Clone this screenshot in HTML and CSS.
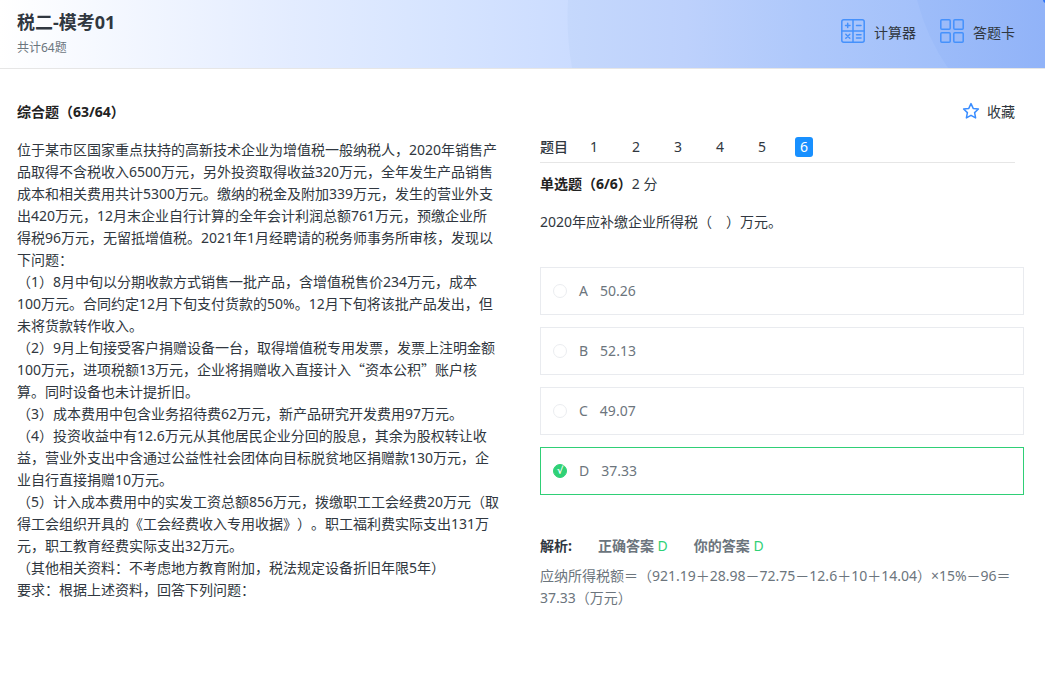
FILE: index.html
```html
<!DOCTYPE html>
<html lang="zh-CN">
<head>
<meta charset="utf-8">
<title>税二-模考01</title>
<link rel="stylesheet" href="styles.css">
</head>
<body>
<header class="header">
  <svg class="header-bg" viewBox="0 0 1045 68" preserveAspectRatio="none" aria-hidden="true">
    <defs>
      <linearGradient id="base" gradientUnits="userSpaceOnUse" x1="0" y1="0" x2="1045" y2="0">
        <stop offset="0" stop-color="#ffffff"/>
        <stop offset="0.28" stop-color="#e3ecff"/>
        <stop offset="0.39" stop-color="#d9e6ff"/>
        <stop offset="0.55" stop-color="#cbdcff"/>
        <stop offset="1" stop-color="#a9c5fd"/>
      </linearGradient>
      <linearGradient id="wave" gradientUnits="userSpaceOnUse" x1="567" y1="0" x2="1045" y2="0">
        <stop offset="0" stop-color="#c5d8fc"/>
        <stop offset="0.25" stop-color="#bdd1fc"/>
        <stop offset="0.5" stop-color="#aec8fb"/>
        <stop offset="1" stop-color="#98b9f9"/>
      </linearGradient>
      <linearGradient id="edge" gradientUnits="userSpaceOnUse" x1="917" y1="0" x2="1045" y2="0">
        <stop offset="0" stop-color="#9ebdf9"/>
        <stop offset="1" stop-color="#91b3f8"/>
      </linearGradient>
    </defs>
    <rect width="1045" height="68" fill="url(#base)"/>
    <path d="M568 0Q566 34 572 68H1045V0Z" fill="url(#wave)"/>
    <path d="M917 0Q927 38 948 68H1045V0Z" fill="url(#edge)"/>
    <path d="M1043 0Q1043 2 1045 3V0Z" fill="#2f74f5"/>
  </svg>
  <div class="heading">
    <h1 class="title">税二-模考01</h1>
    <p class="total">共计64题</p>
  </div>
  <nav class="tools">
    <button class="tool" type="button">
      <svg class="tool-icon" width="26" height="26" viewBox="0 0 26 26" fill="none" stroke="#4591fc" stroke-width="1.5" stroke-linecap="round" aria-hidden="true">
        <rect x="1.8" y="1.8" width="22.4" height="22.4" rx="2"/>
        <path d="M13 2V24M2 13H24M5.5 7.4H10M7.7 5.2V9.6M16.5 7.4H21M5.8 16.3L9.8 20.3M9.8 16.3L5.8 20.3M16.5 16.7H21M16.5 19.9H21"/>
      </svg>
      计算器
    </button>
    <button class="tool" type="button">
      <svg class="tool-icon" width="26" height="26" viewBox="0 0 26 26" fill="none" stroke="#4591fc" stroke-width="1.5" aria-hidden="true">
        <rect x="1.8" y="1.8" width="9.4" height="9.4" rx="1"/>
        <rect x="14.8" y="1.8" width="9.4" height="9.4" rx="1"/>
        <rect x="1.8" y="14.8" width="9.4" height="9.4" rx="1"/>
        <rect x="14.8" y="14.8" width="9.4" height="9.4" rx="1"/>
      </svg>
      答题卡
    </button>
  </nav>
</header>
<main class="main">
  <div class="bar">
    <h2 class="bar-title">综合题（63/64）</h2>
    <button class="favorite" type="button">
      <svg class="star" width="18" height="18" viewBox="0 0 18 18" fill="none" stroke="#3a8dff" stroke-width="1.5" stroke-linejoin="round" aria-hidden="true">
        <path d="M9 1.6L11.2 6.4L16.4 7L12.6 10.6L13.6 15.9L9 13.3L4.4 15.9L5.4 10.6L1.6 7L6.8 6.4Z"/>
      </svg>
      收藏
    </button>
  </div>
  <div class="columns">
    <article class="material">
      <p>位于某市区国家重点扶持的高新技术企业为增值税一般纳税人，2020年销售产<br>品取得不含税收入6500万元，另外投资取得收益320万元，全年发生产品销售<br>成本和相关费用共计5300万元。缴纳的税金及附加339万元，发生的营业外支<br>出420万元，12月末企业自行计算的全年会计利润总额761万元，预缴企业所<br>得税96万元，无留抵增值税。2021年1月经聘请的税务师事务所审核，发现以<br>下问题：</p>
      <p>（1）8月中旬以分期收款方式销售一批产品，含增值税售价234万元，成本<br>100万元。合同约定12月下旬支付货款的50%。12月下旬将该批产品发出，但<br>未将货款转作收入。</p>
      <p>（2）9月上旬接受客户捐赠设备一台，取得增值税专用发票，发票上注明金额<br>100万元，进项税额13万元，企业将捐赠收入直接计入<span class="quoted">“资本公积”</span>账户核<br>算。同时设备也未计提折旧。</p>
      <p>（3）成本费用中包含业务招待费62万元，新产品研究开发费用97万元。</p>
      <p>（4）投资收益中有12.6万元从其他居民企业分回的股息，其余为股权转让收<br>益，营业外支出中含通过公益性社会团体向目标脱贫地区捐赠款130万元，企<br>业自行直接捐赠10万元。</p>
      <p>（5）计入成本费用中的实发工资总额856万元，拨缴职工工会经费20万元（取<br>得工会组织开具的《工会经费收入专用收据》）。职工福利费实际支出131万<br>元，职工教育经费实际支出32万元。</p>
      <p>（其他相关资料：不考虑地方教育附加，税法规定设备折旧年限5年）</p>
      <p>要求：根据上述资料，回答下列问题：</p>
    </article>
    <section class="question">
      <div class="tabs">
        <span class="tabs-label">题目</span>
        <div class="tabs-list">
          <button class="tab" type="button">1</button>
          <button class="tab" type="button">2</button>
          <button class="tab" type="button">3</button>
          <button class="tab" type="button">4</button>
          <button class="tab" type="button">5</button>
          <button class="tab tab-active" type="button">6</button>
        </div>
      </div>
      <p class="kind"><strong>单选题（6/6）</strong>2 分</p>
      <p class="stem">2020年应补缴企业所得税（　）万元。</p>
      <div class="options">
        <label class="option"><input class="radio" type="radio" name="answer"><span>A</span><span>50.26</span></label>
        <label class="option"><input class="radio" type="radio" name="answer"><span>B</span><span>52.13</span></label>
        <label class="option"><input class="radio" type="radio" name="answer"><span>C</span><span>49.07</span></label>
        <label class="option option-right"><input class="radio" type="radio" name="answer" checked><span>D</span><span>37.33</span></label>
      </div>
      <div class="result">
        <strong class="result-label">解析:</strong>
        <span><strong>正确答案</strong> <span class="letter">D</span></span>
        <span><strong>你的答案</strong> <span class="letter">D</span></span>
      </div>
      <p class="analysis">应纳所得税额＝（921.19＋28.98－72.75－12.6＋10＋14.04）×15%－96＝<br>37.33（万元）</p>
    </section>
  </div>
</main>
</body>
</html>
```
FILE: styles.css
```css
* {
  box-sizing: border-box;
}

body {
  margin: 0;
  background: #fff;
  color: #303740;
  font: 14px/22px "Noto Sans", "Noto Sans CJK SC", sans-serif;
  text-spacing-trim: space-all;
}

h1, h2, p {
  margin: 0;
}

button {
  padding: 0;
  border: 0;
  background: none;
  color: inherit;
  font: inherit;
  cursor: pointer;
}

.header {
  position: relative;
  display: flex;
  justify-content: space-between;
  align-items: flex-start;
  padding: 8px 30px 8px 17px;
  border-bottom: 1px solid #e6e6e6;
}

.header-bg {
  position: absolute;
  inset: 0;
  width: 100%;
  height: 100%;
}

.heading,
.tools {
  position: relative;
}

.title {
  font-size: 18px;
  line-height: 28px;
}

.total {
  color: #6c757d;
  font-size: 12px;
  line-height: 24px;
}

.tools {
  display: flex;
  gap: 23px;
  padding-top: 10px;
}

.tool {
  display: flex;
  align-items: center;
  gap: 8px;
}

.tool-icon {
  margin-bottom: 4px;
}

.main {
  padding: 32px 21px 32px 17px;
}

.bar {
  display: flex;
  justify-content: space-between;
  align-items: center;
  padding-right: 9px;
}

.bar-title {
  color: #222;
  font-size: 14px;
  line-height: 22px;
}

.favorite {
  display: flex;
  align-items: center;
  gap: 7px;
}

.star {
  margin-bottom: 2px;
}

.columns {
  display: grid;
  grid-template-columns: 1fr 1fr;
  gap: 39px;
  padding-top: 13px;
}

.material {
  padding-top: 3px;
  white-space: nowrap;
}

.quoted {
  font-family: "Noto Sans CJK SC", sans-serif;
  line-height: 1;
}

.tabs {
  display: flex;
  align-items: center;
  gap: 17px;
  margin-right: 9px;
  padding-bottom: 4px;
  border-bottom: 1px solid #e6e6e6;
}

.tabs-label {
  font-weight: 500;
}

.tabs-list {
  display: flex;
  gap: 24px;
}

.tab {
  width: 18px;
  border-radius: 3px;
  line-height: 20px;
}

.tab-active {
  background: #1890ff;
  color: #fff;
}

.kind {
  padding-top: 10px;
}

.kind strong {
  color: #222;
}

.stem {
  padding-top: 16px;
}

.options {
  display: grid;
  gap: 12px;
  padding-top: 34px;
}

.option {
  display: flex;
  align-items: center;
  gap: 12px;
  padding: 12px;
  border: 1px solid #e9ebef;
  color: #6c757d;
  cursor: pointer;
}

.option-right {
  border-color: #2fcf76;
}

.radio {
  display: grid;
  place-items: center;
  appearance: none;
  width: 14px;
  height: 14px;
  margin: 0;
  border: 1px solid #ebedf0;
  border-radius: 50%;
}

.radio:checked {
  border-color: #2fd176;
  background: #2fd176;
}

.radio:checked::before {
  content: "√";
  color: #fff;
  font: bold 10px/12px "DejaVu Sans", sans-serif;
}

.result {
  display: flex;
  gap: 26px;
  padding-top: 40px;
  color: #6c757d;
}

.result-label {
  color: #303740;
}

.letter {
  color: #2fd176;
}

.analysis {
  padding-top: 8px;
  color: #6c757d;
}
```
